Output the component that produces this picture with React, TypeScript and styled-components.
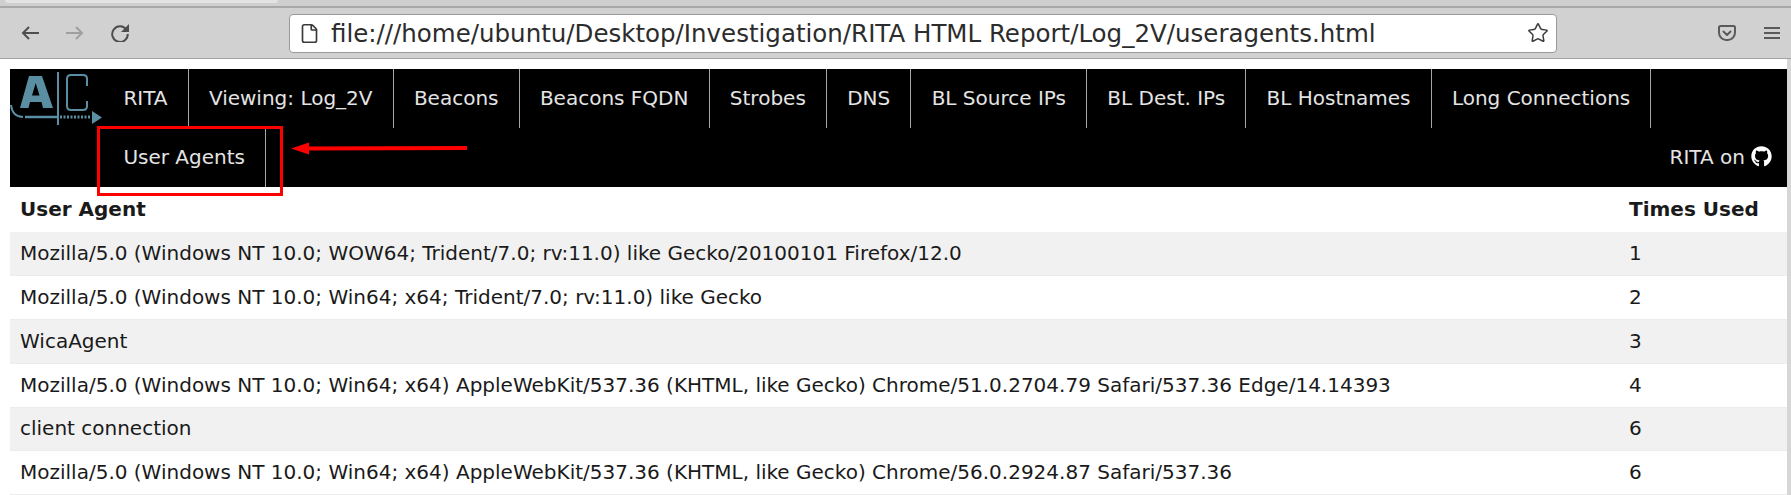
import styled, { createGlobalStyle } from 'styled-components';
import { File, Star } from 'lucide-react';
import { FaGithub } from 'react-icons/fa';

const GlobalStyle = createGlobalStyle`
  html, body { margin: 0; padding: 0; background: #fff; }
  body { font-family: "DejaVu Sans", sans-serif; overflow: hidden; }
`;

const Page = styled.div`
  width: 1791px;
  height: 495px;
  display: flex;
  flex-direction: column;
  position: relative;
  overflow: hidden;
`;

const TabStrip = styled.div`
  height: 8px;
  background: #cfcfcf;
  border-bottom: 2px solid #a8a8a8;
  box-sizing: border-box;
  padding-left: 5px;
`;

const ActiveTab = styled.div`
  width: 273px;
  height: 3px;
  background: #e3e3e3;
  border-radius: 0 0 4px 4px;
`;

const Toolbar = styled.div`
  height: 51px;
  box-sizing: border-box;
  background: #d1d1d1;
  border-bottom: 1px solid #a3a3a3;
  display: flex;
  align-items: center;
  padding: 0 11px 0 21px;
`;

const NavIcons = styled.div`
  display: flex;
  align-items: center;
  gap: 27px;
`;

const NavIcon = styled.svg<{ $muted?: boolean }>`
  color: ${(p) => (p.$muted ? '#a0a0a0' : '#4e4e4e')};
  flex: none;
`;

const UrlBar = styled.div`
  width: 1268px;
  height: 39px;
  margin-left: 160px;
  box-sizing: border-box;
  background: #fff;
  border: 1px solid #9a9a9a;
  border-radius: 4px;
  display: flex;
  align-items: center;
  padding: 0 7px 0 9px;
  color: #3a3a3a;
`;

const UrlText = styled.span`
  flex: 1;
  font-size: 24.5px;
  margin-left: 11px;
  white-space: nowrap;
  color: #2c2c2c;
`;

const ToolbarRight = styled.div`
  margin-left: auto;
  display: flex;
  align-items: center;
  gap: 28px;
  color: #5a5a5a;
`;

const Main = styled.div`
  flex: 1;
  display: flex;
  min-height: 0;
`;

const Content = styled.div`
  flex: 1;
  padding: 10px 0 0 10px;
  background: #fff;
`;

const ScrollTrack = styled.div`
  width: 4px;
  background: #d6d6d6;
`;

const Nav = styled.nav`
  background: #000;
  height: 118px;
  display: flex;
  flex-wrap: wrap;
  align-content: flex-start;
  position: relative;
  padding-left: 93.2px;
  box-sizing: border-box;
`;

const NavLink = styled.a`
  height: 59px;
  box-sizing: border-box;
  padding: 0 20.2px 2px;
  display: flex;
  align-items: center;
  color: #e4e4e4;
  font-size: 20px;
  border-right: 1px solid #a6a6a6;
  white-space: nowrap;
`;

const Github = styled.div`
  height: 59px;
  margin-left: auto;
  padding: 0 15px 2px 0;
  box-sizing: border-box;
  color: #e4e4e4;
  font-size: 20px;
  display: flex;
  align-items: center;
  gap: 6px;
`;

const Logo = styled.svg`
  position: absolute;
  left: 0;
  top: 0;
`;

const Table = styled.table`
  width: 100%;
  border-collapse: collapse;
  font-size: 20px;
  color: #1a1a1a;
`;

const HeadCell = styled.th`
  height: 45px;
  padding: 0 10px 2px;
  box-sizing: border-box;
  text-align: left;
  font-weight: bold;
`;

const CountHead = styled(HeadCell)`
  width: 168px;
  white-space: nowrap;
`;

const Row = styled.tr`
  &:nth-child(odd) { background: #f1f1f1; }
  border-bottom: 1px solid #ececec;
`;

const Cell = styled.td`
  height: 43.75px;
  padding: 0 10px 1px;
  box-sizing: border-box;
`;

const Highlight = styled.div`
  position: absolute;
  left: 97px;
  top: 126px;
  width: 186px;
  height: 70px;
  box-sizing: border-box;
  border: 3px solid #f00;
`;

const Arrow = styled.svg`
  position: absolute;
  left: 290px;
  top: 140px;
`;

const links = ['RITA', 'Viewing: Log_2V', 'Beacons', 'Beacons FQDN', 'Strobes', 'DNS', 'BL Source IPs', 'BL Dest. IPs', 'BL Hostnames', 'Long Connections', 'User Agents'];

const rows: [string, number][] = [
  ['Mozilla/5.0 (Windows NT 10.0; WOW64; Trident/7.0; rv:11.0) like Gecko/20100101 Firefox/12.0', 1],
  ['Mozilla/5.0 (Windows NT 10.0; Win64; x64; Trident/7.0; rv:11.0) like Gecko', 2],
  ['WicaAgent', 3],
  ['Mozilla/5.0 (Windows NT 10.0; Win64; x64) AppleWebKit/537.36 (KHTML, like Gecko) Chrome/51.0.2704.79 Safari/537.36 Edge/14.14393', 4],
  ['client connection', 6],
  ['Mozilla/5.0 (Windows NT 10.0; Win64; x64) AppleWebKit/537.36 (KHTML, like Gecko) Chrome/56.0.2924.87 Safari/537.36', 6],
];

const teal = '#5a8ea3';

function App() {
  return (
    <Page>
      <GlobalStyle />
      <TabStrip>
        <ActiveTab />
      </TabStrip>
      <Toolbar>
        <NavIcons>
          <NavIcon width="18" height="14" viewBox="0 0 18 14" fill="none" stroke="currentColor" strokeWidth="2">
            <path d="M18 7H2M8 1L2 7l6 6" />
          </NavIcon>
          <NavIcon $muted width="18" height="14" viewBox="0 0 18 14" fill="none" stroke="currentColor" strokeWidth="2">
            <path d="M0 7h16M10 1l6 6-6 6" />
          </NavIcon>
          <NavIcon width="18" height="18" viewBox="0 0 18 18" fill="none" stroke="currentColor" strokeWidth="2">
            <path d="M15.6 6A7.8 7.8 0 1 0 16.8 10" />
            <path d="M18 0v8h-8z" fill="currentColor" stroke="none" />
          </NavIcon>
        </NavIcons>
        <UrlBar>
          <File size={21} strokeWidth={1.9} />
          <UrlText>file:///home/ubuntu/Desktop/Investigation/RITA HTML Report/Log_2V/useragents.html</UrlText>
          <Star size={22} strokeWidth={1.6} />
        </UrlBar>
        <ToolbarRight>
          <svg width="18" height="16" viewBox="0 0 18 16" fill="none" stroke="currentColor" strokeWidth="2">
            <path d="M2.500 1h13A1.500 1.500 0 0 1 17 2.500V7a7 7.800 0 0 1-7 8H8A7 7.800 0 0 1 1 7V2.500A1.500 1.500 0 0 1 2.500 1z" />
            <path d="M5.500 6.500L9 10l3.500-3.500" strokeLinecap="round" strokeLinejoin="round" />
          </svg>
          <svg width="16" height="14" viewBox="0 0 16 14" fill="none" stroke="currentColor" strokeWidth="2">
            <path d="M0 2h16M0 7h16M0 12h16" />
          </svg>
        </ToolbarRight>
      </Toolbar>
      <Main>
        <Content>
          <Nav>
            <Logo width="93" height="57" viewBox="0 0 93 57">
              <path d="M10 39 L19 7 H32 L43 39 H33 L31.500 33 H20 L18.500 39 Z M22 26.500 H29.500 L25.700 14 Z" fill={teal} fillRule="evenodd" />
              <path d="M1 36 C2 44 6 48 13 48" fill="none" stroke={teal} strokeWidth="2" />
              <path d="M15 48 H48" stroke={teal} strokeWidth="2.500" />
              <path d="M48 3 V56" stroke={teal} strokeWidth="2" />
              <path d="M77 17 V10 Q77 6 73 6 H61 Q57 6 57 10 V37 Q57 41 61 41 H73 Q77 41 77 37 V32" fill="none" stroke={teal} strokeWidth="2" />
              <path d="M50 48 H81" stroke={teal} strokeWidth="3" strokeDasharray="2 1.500" />
              <path d="M82 42 L92 48.500 L82 55 Z" fill={teal} />
            </Logo>
            {links.map((l) => <NavLink key={l}>{l}</NavLink>)}
            <Github>RITA on <FaGithub size={21} color="#fff" /></Github>
          </Nav>
          <Table>
            <thead>
              <tr>
                <HeadCell>User Agent</HeadCell>
                <CountHead>Times Used</CountHead>
              </tr>
            </thead>
            <tbody>
              {rows.map(([ua, n]) => (
                <Row key={ua}>
                  <Cell>{ua}</Cell>
                  <Cell>{n}</Cell>
                </Row>
              ))}
            </tbody>
          </Table>
        </Content>
        <ScrollTrack />
      </Main>
      <Highlight />
      <Arrow width="178" height="16" viewBox="0 0 178 16">
        <path d="M16 8.500 L177 8" stroke="#f00" strokeWidth="4" />
        <path d="M1 8.500 L19 2.500 V14.500 Z" fill="#f00" />
      </Arrow>
    </Page>
  );
}

export default App;
